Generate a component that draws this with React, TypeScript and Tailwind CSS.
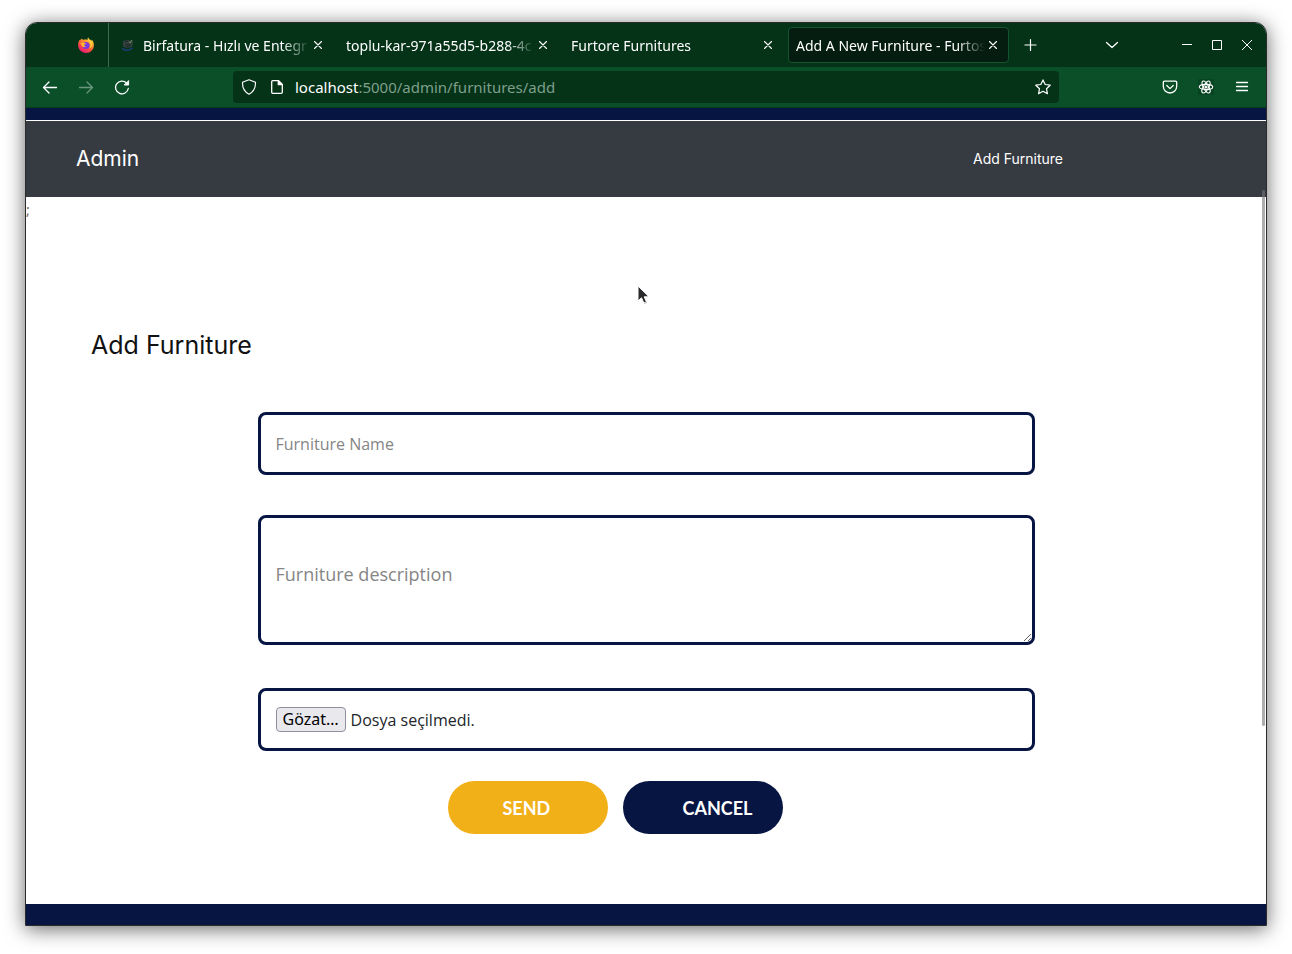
import type { ReactNode } from 'react';

function FirefoxLogo() {
  return (
    <svg width="16" height="16" viewBox="0 0 16 16" aria-hidden="true">
      <defs>
        <linearGradient id="flame" x1="0.85" y1="0" x2="0.25" y2="1">
          <stop offset="0" stopColor="#fff44f" />
          <stop offset="0.35" stopColor="#ff9a2e" />
          <stop offset="0.65" stopColor="#ff4a3f" />
          <stop offset="1" stopColor="#e31587" />
        </linearGradient>
      </defs>
      <path
        d="M10.2.2c-.8 1-.7 2-.5 2.700-.9-.4-2-.5-3-.3L5 2.800C4.300 2.500 4 1.900 4 1.500 2.900 2.200 2.700 3 2.600 3.500c-.3-.3-.4-.9-.3-1.300C1 3.500.1 5.600.1 8.100.1 12.500 3.600 16 8 16s7.900-3.500 7.900-8c0-2.200-.9-4.300-2.400-5.500.3.500.4 1 .4 1.300C12.900 2.700 10.700 2.500 10.200.2z"
        fill="url(#flame)"
      />
      <circle cx="8" cy="8.500" r="3.600" fill="#7a3be0" />
      <path d="M2.300 6.300c1-1 2.600-1 3.500-.6l2.200.5c-.2.900-1.500 1.100-1.900 1.500-.2.700.5 1.500 1.700 1.500-1.200 1.700-4 .9-4.300-1.200z" fill="#ffb62e" />
      <path d="M11.500 5c1.700 1.800 1.500 5-.4 6.400 3.300-.8 3.900-4.800 1.800-6.700C11.900 3.500 10.800 3 10.200 1.800c0 1.400.4 2.200 1.300 3.200z" fill="#ffd83c" />
    </svg>
  );
}

function BirfaturaLogo() {
  return (
    <svg width="16" height="16" viewBox="0 0 16 16" aria-hidden="true">
      <path d="M2 4l5-1 5 1-1 6-6 1-3-2z" fill="#33423f" />
      <path d="M4 5l3-1M4 8l5-1M5 10l5-2" stroke="#1c2826" />
      <path d="M8 5l1 1 2-3" fill="none" stroke="#6b8a62" />
      <path d="M1.500 11c1 3 7 3 10 0" fill="none" stroke="#1f3c78" strokeWidth="1.500" />
    </svg>
  );
}

function Glyph({ d, size = 16, width = 1.2 }: { d: string; size?: number; width?: number }) {
  return (
    <svg
      width={size}
      height={size}
      viewBox="0 0 16 16"
      fill="none"
      stroke="currentColor"
      strokeWidth={width}
      strokeLinecap="round"
      strokeLinejoin="round"
      aria-hidden="true"
    >
      <path d={d} />
    </svg>
  );
}

function IconButton({ label, className, children }: { label: string; className?: string; children: ReactNode }) {
  return (
    <button type="button" aria-label={label} className={`flex h-8 items-center justify-center ${className ?? 'w-9'}`}>
      {children}
    </button>
  );
}

function Tab({ title, icon, active }: { title: string; icon?: ReactNode; active?: boolean }) {
  return (
    <div
      className={`flex h-9 w-[221px] min-w-0 items-center rounded border pl-[7px] pr-[7px] ${
        active ? 'border-[#14552f] bg-[#051c10]' : 'border-transparent'
      }`}
    >
      {icon && <span className="mr-1.5 shrink-0">{icon}</span>}
      <button
        type="button"
        className="min-w-0 flex-1 overflow-hidden whitespace-nowrap pt-px text-left [mask-image:linear-gradient(to_left,transparent,black_28px)]"
      >
        {title}
      </button>
      <button type="button" aria-label={`Close ${title}`} className="flex w-4 shrink-0 justify-center">
        <Glyph d="M4.500 4.500l7 7M11.500 4.500l-7 7" width={1.1} />
      </button>
    </div>
  );
}

function TabBar() {
  return (
    <div className="flex h-11 items-center bg-[#043318] text-sm">
      <button type="button" aria-label="Firefox" className="flex h-11 w-[83px] shrink-0 items-center justify-end border-r border-[#3f6a4d] pr-3.5">
        <FirefoxLogo />
      </button>
      <div className="ml-1 flex min-w-0 gap-1">
        <Tab title="Birfatura - Hızlı ve Entegr" icon={<BirfaturaLogo />} />
        <Tab title="toplu-kar-971a55d5-b288-4c" />
        <Tab title="Furtore Furnitures" />
        <Tab title="Add A New Furniture - Furtos" active />
      </div>
      <IconButton label="New tab" className="ml-1 w-9">
        <Glyph d="M7.500 2.500v11M2 8h11" width={1.2} />
      </IconButton>
      <IconButton label="List all tabs" className="ml-auto w-9">
        <Glyph d="M2.500 5.500l5.500 5 5.500-5" width={1.3} />
      </IconButton>
      <div className="ml-[42px] mr-1 flex">
        <IconButton label="Minimize" className="w-[30px]">
          <svg width="10" height="10" viewBox="0 0 10 10" stroke="currentColor" fill="none"><path d="M0 4.500h10" /></svg>
        </IconButton>
        <IconButton label="Maximize" className="w-[30px]">
          <svg width="10" height="10" viewBox="0 0 10 10" stroke="currentColor" fill="none"><path d="M.5.5h9v9h-9z" /></svg>
        </IconButton>
        <IconButton label="Close window" className="w-[30px]">
          <svg width="10" height="10" viewBox="0 0 10 10" stroke="currentColor" fill="none"><path d="M0 0l10 10M10 0L0 10" /></svg>
        </IconButton>
      </div>
    </div>
  );
}

function Toolbar() {
  return (
    <div className="flex h-[41px] items-center border-b border-[#053d1e] bg-[#0a4f28]">
      <div className="flex w-[207px] shrink-0 pl-1.5">
        <IconButton label="Back"><Glyph d="M14.500 8.500h-13M7 3L1.500 8.500 7 14" width={1.3} /></IconButton>
        <IconButton label="Forward" className="w-9 opacity-40"><Glyph d="M1.500 8.500h13M9 3l5.500 5.500L9 14" width={1.3} /></IconButton>
        <IconButton label="Reload">
          <svg width="16" height="16" viewBox="0 0 16 16" fill="none" stroke="currentColor" strokeWidth="1.300" strokeLinecap="round">
            <path d="M14.300 9.500A6.400 6.400 0 1 1 12.600 4L14 5.300" />
            <path d="M14.600 2v4h-4z" fill="currentColor" strokeWidth="1" strokeLinejoin="round" />
          </svg>
        </IconButton>
      </div>
      <div className="flex h-8 min-w-0 flex-1 items-center rounded bg-[#043318] pl-2 pr-2">
        <span className="shrink-0">
          <Glyph d="M8 .8l6.500 2.400c.2 5-1.500 9.500-6.500 12-5-2.500-6.700-7-6.500-12z" />
        </span>
        <span className="ml-3 shrink-0">
          <svg width="16" height="16" viewBox="0 0 16 16" fill="none" stroke="currentColor" strokeWidth="1.300" strokeLinejoin="round">
            <path d="M9.500 1.700H3.700a1 1 0 0 0-1 1v10.600a1 1 0 0 0 1 1h8.600a1 1 0 0 0 1-1V5.500z" />
            <path d="M9.300 1.700v4h4z" fill="currentColor" />
          </svg>
        </span>
        <span className="ml-2.5 flex-1 truncate text-[15px] text-[#7f9f8b]">
          <span className="text-white">localhost</span>:5000/admin/furnitures/add
        </span>
        <button type="button" aria-label="Bookmark this page">
          <Glyph d="M8 .9l2.200 4.600 5 .7-3.700 3.500.9 5L8 12.300l-4.400 2.400.9-5L.8 6.200l5-.7z" />
        </button>
      </div>
      <div className="flex w-[207px] shrink-0 justify-end pr-1.5">
        <IconButton label="Save to Pocket">
          <Glyph d="M2.500 2.200h11a1.200 1.200 0 0 1 1.200 1.200v3.900a6.700 6.700 0 0 1-13.400 0V3.400a1.200 1.200 0 0 1 1.200-1.200zM4.800 6.500L8 9.600l3.200-3.100" width={1.3} />
        </IconButton>
        <IconButton label="React Developer Tools">
          <svg width="16" height="16" viewBox="0 0 16 16" fill="none" stroke="currentColor" strokeWidth="1.100">
            <rect width="16" height="16" rx="1" fill="#074422" stroke="none" />
            <ellipse cx="8" cy="8" rx="6.700" ry="2.600" />
            <ellipse cx="8" cy="8" rx="6.700" ry="2.600" transform="rotate(60 8 8)" />
            <ellipse cx="8" cy="8" rx="6.700" ry="2.600" transform="rotate(120 8 8)" />
            <circle cx="8" cy="8" r="1" fill="currentColor" />
          </svg>
        </IconButton>
        <IconButton label="Open application menu">
          <svg width="16" height="16" viewBox="0 0 16 16" stroke="currentColor" strokeLinecap="round">
            <path d="M2.500 3.500h11M2.500 7.500h11M2.500 11.500h11" strokeWidth="1.300" />
          </svg>
        </IconButton>
      </div>
    </div>
  );
}

const field = 'block w-full rounded-lg border-[3px] border-[#071543] bg-white px-[15px] placeholder:text-[#858585]';

function FurnitureForm() {
  return (
    <form className="mx-auto w-full max-w-[777px] font-['Open_Sans','Noto_Sans',sans-serif]">
      <input aria-label="Furniture Name" placeholder="Furniture Name" className={`${field} h-[63px] text-base`} />
      <textarea
        aria-label="Furniture description"
        placeholder="Furniture description"
        className={`${field} mt-10 h-[130px] pt-[42px] text-lg`}
      />
      <label htmlFor="picture" className={`${field} mt-[43px] flex h-[63px] items-center`}>
        <input id="picture" type="file" className="sr-only" />
        <span className="rounded border border-[#8f8f9d] bg-[#e9e9ed] px-1.5 font-['Noto_Sans',sans-serif] text-base leading-[23px] text-black">
          Gözat…
        </span>
        <span className="ml-[5px] text-base text-[#212529]">Dosya seçilmedi.</span>
      </label>
      <div className="mt-[30px] flex gap-[15px] pl-[190px] font-['Lato',sans-serif] text-lg font-bold text-white">
        <button type="submit" className="h-[53px] w-40 rounded-full bg-[#f2b018] pl-[55px] text-left">SEND</button>
        <button type="button" className="h-[53px] w-40 rounded-full bg-[#071543] pl-[60px] text-left">CANCEL</button>
      </div>
    </form>
  );
}

export default function App() {
  return (
    <div className="min-h-screen bg-white px-[25px] pb-7 pt-[22px]">
      <div className="relative overflow-hidden rounded-t-xl border border-[#2b2b2e] bg-white font-['Noto_Sans',sans-serif] text-white shadow-[0_3px_20px_rgba(0,0,0,0.6)]">
        <TabBar />
        <Toolbar />
        <div className="h-3 bg-[#071543]" />
        <nav className="mt-px flex h-[76px] items-center justify-between bg-[#363a41] pl-[50px] pr-[203px] font-['Inter',sans-serif]">
          <a href="#admin" className="text-[21px]">Admin</a>
          <a href="#add" className="text-sm">Add Furniture</a>
        </nav>
        <main className="pb-[70px] text-[#111]">
          <p className="h-6 text-sm leading-[26px] text-[#666]">;</p>
          <h1 className="mb-[49px] ml-[65px] mt-[106px] font-['Inter',sans-serif] text-[25px] leading-9">Add Furniture</h1>
          <FurnitureForm />
        </main>
        <footer className="h-[21px] bg-[#071543]" />
        <div className="absolute right-px top-[167px] h-[536px] w-[3px] rounded-full bg-[#777]/60" />
        <svg className="absolute left-[611px] top-[262px]" width="14" height="20" viewBox="0 0 14 20" aria-hidden="true">
          <path d="M1 1v15l3.500-3.200 2.300 5.200 2.700-1.200-2.300-5H12z" fill="#2b2b2e" stroke="#fff" />
          <path d="M7 18.500l3-1.200" stroke="#bbb" />
        </svg>
      </div>
    </div>
  );
}
